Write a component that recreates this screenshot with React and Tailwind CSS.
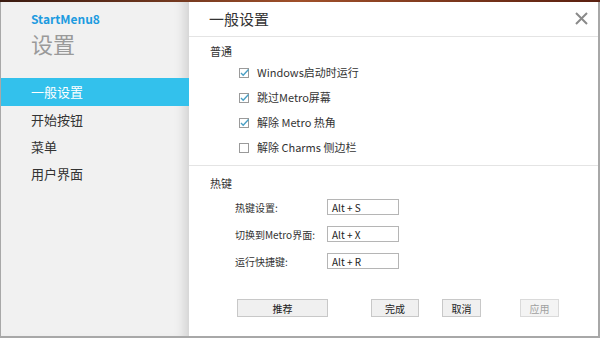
import React from 'react';

const font = { fontFamily: '"Noto Sans CJK SC", "Noto Sans", sans-serif' };

function Check({ checked }) {
    return (
        <svg width="10" height="10" viewBox="0 0 10 10" className="shrink-0">
            <rect x="0.5" y="0.5" width="9" height="9" fill="#fff" stroke="#9a9a9a" />
            {checked && <path d="M2 5 L4.2 7.2 L9.5 1.5" fill="none" stroke="#4a9fc4" strokeWidth="1.4" />}
        </svg>
    );
}

export default function App() {
    const nav = ['一般设置', '开始按钮', '菜单', '用户界面'];
    const opts = [
        ['Windows启动时运行', true],
        ['跳过Metro屏幕', true],
        ['解除 Metro 热角', true],
        ['解除 Charms 侧边栏', false],
    ];
    const keys = [
        ['热键设置:', 'Alt + S'],
        ['切换到Metro界面:', 'Alt + X'],
        ['运行快捷键:', 'Alt + R'],
    ];

    return (
        <div className="w-[600px] h-[338px] flex flex-col bg-[#6b2a18]" style={font}>
            <div className="h-[2px] bg-gradient-to-r from-[#3a1a10] via-[#a0502a] to-[#5a2010]" />
            <div className="flex-1 flex border-l border-r-2 border-b-2 border-[#a8a8a8] bg-white overflow-hidden">
                {/* Sidebar */}
                <div className="w-[188px] shrink-0 bg-[#f1f1f1] flex flex-col shadow-[inset_-12px_0_12px_-8px_rgba(0,0,0,0.14)]">
                    <div className="pl-[30px] pt-[10px] text-[12px] font-bold text-[#1d9be0] leading-[14px]">StartMenu8</div>
                    <div className="pl-[30px] pt-[6px] text-[22px] text-[#9a9a9a] leading-[22px]">设置</div>
                    <div className="mt-[24px] flex flex-col">
                        {nav.map((n, i) => (
                            <div
                                key={n}
                                className={
                                    i === 0
                                        ? 'h-[28px] pl-[30px] flex items-center text-[13px] text-white bg-[#33c1ec]'
                                        : 'h-[27px] pl-[30px] flex items-center text-[13px] text-[#333]'
                                }
                            >
                                {n}
                            </div>
                        ))}
                    </div>
                </div>

                {/* Main */}
                <div className="flex-1 flex flex-col">
                    <div className="h-[35px] border-b border-[#e4e4e4] flex items-center justify-between pl-[20px] pr-[10px]">
                        <span className="text-[15px] text-[#333]">一般设置</span>
                        <svg width="13" height="13" viewBox="0 0 13 13" className="-mt-[2px]">
                            <path d="M1 1 L12 12 M12 1 L1 12" stroke="#8a8a8a" strokeWidth="2" />
                        </svg>
                    </div>

                    <div className="h-[129px] border-b border-[#e4e4e4] pl-[21px] pt-[7px]">
                        <div className="text-[11px] text-[#333] leading-[14px]">普通</div>
                        <div className="flex flex-col pl-[29px] pt-[2px]">
                            {opts.map(([t, c]) => (
                                <div key={t} className="h-[25px] flex items-center gap-[8px] text-[11px] text-[#333]">
                                    <Check checked={c} />
                                    <span>{t}</span>
                                </div>
                            ))}
                        </div>
                    </div>

                    <div className="flex-1 flex flex-col pl-[21px] pt-[10px]">
                        <div className="text-[11px] text-[#333] leading-[14px]">热键</div>
                        <div className="flex flex-col pl-[25px] pt-[9px] gap-[11px]">
                            {keys.map(([l, v]) => (
                                <div key={l} className="flex items-center text-[10px] text-[#333]">
                                    <span className="w-[92px]">{l}</span>
                                    <div className="w-[72px] h-[16px] border border-[#b5b5b5] flex items-center pl-[4px] text-[10px] text-[#222]">
                                        {v}
                                    </div>
                                </div>
                            ))}
                        </div>
                        <div className="flex items-center mt-[30px] pl-[27px] text-[10px]">
                            <div className="w-[91px] h-[18px] border border-[#c8c8c8] bg-[#f0f0f0] flex items-center justify-center text-[#222]">推荐</div>
                            <div className="w-[48px] h-[18px] ml-[43px] border border-[#c8c8c8] bg-[#f0f0f0] flex items-center justify-center text-[#222]">完成</div>
                            <div className="w-[39px] h-[18px] ml-[23px] border border-[#c8c8c8] bg-[#f0f0f0] flex items-center justify-center text-[#222]">取消</div>
                            <div className="w-[39px] h-[18px] ml-[39px] border border-[#dadada] bg-[#f4f4f4] flex items-center justify-center text-[#a0a0a0]">应用</div>
                        </div>
                    </div>
                </div>
            </div>
        </div>
    );
}
